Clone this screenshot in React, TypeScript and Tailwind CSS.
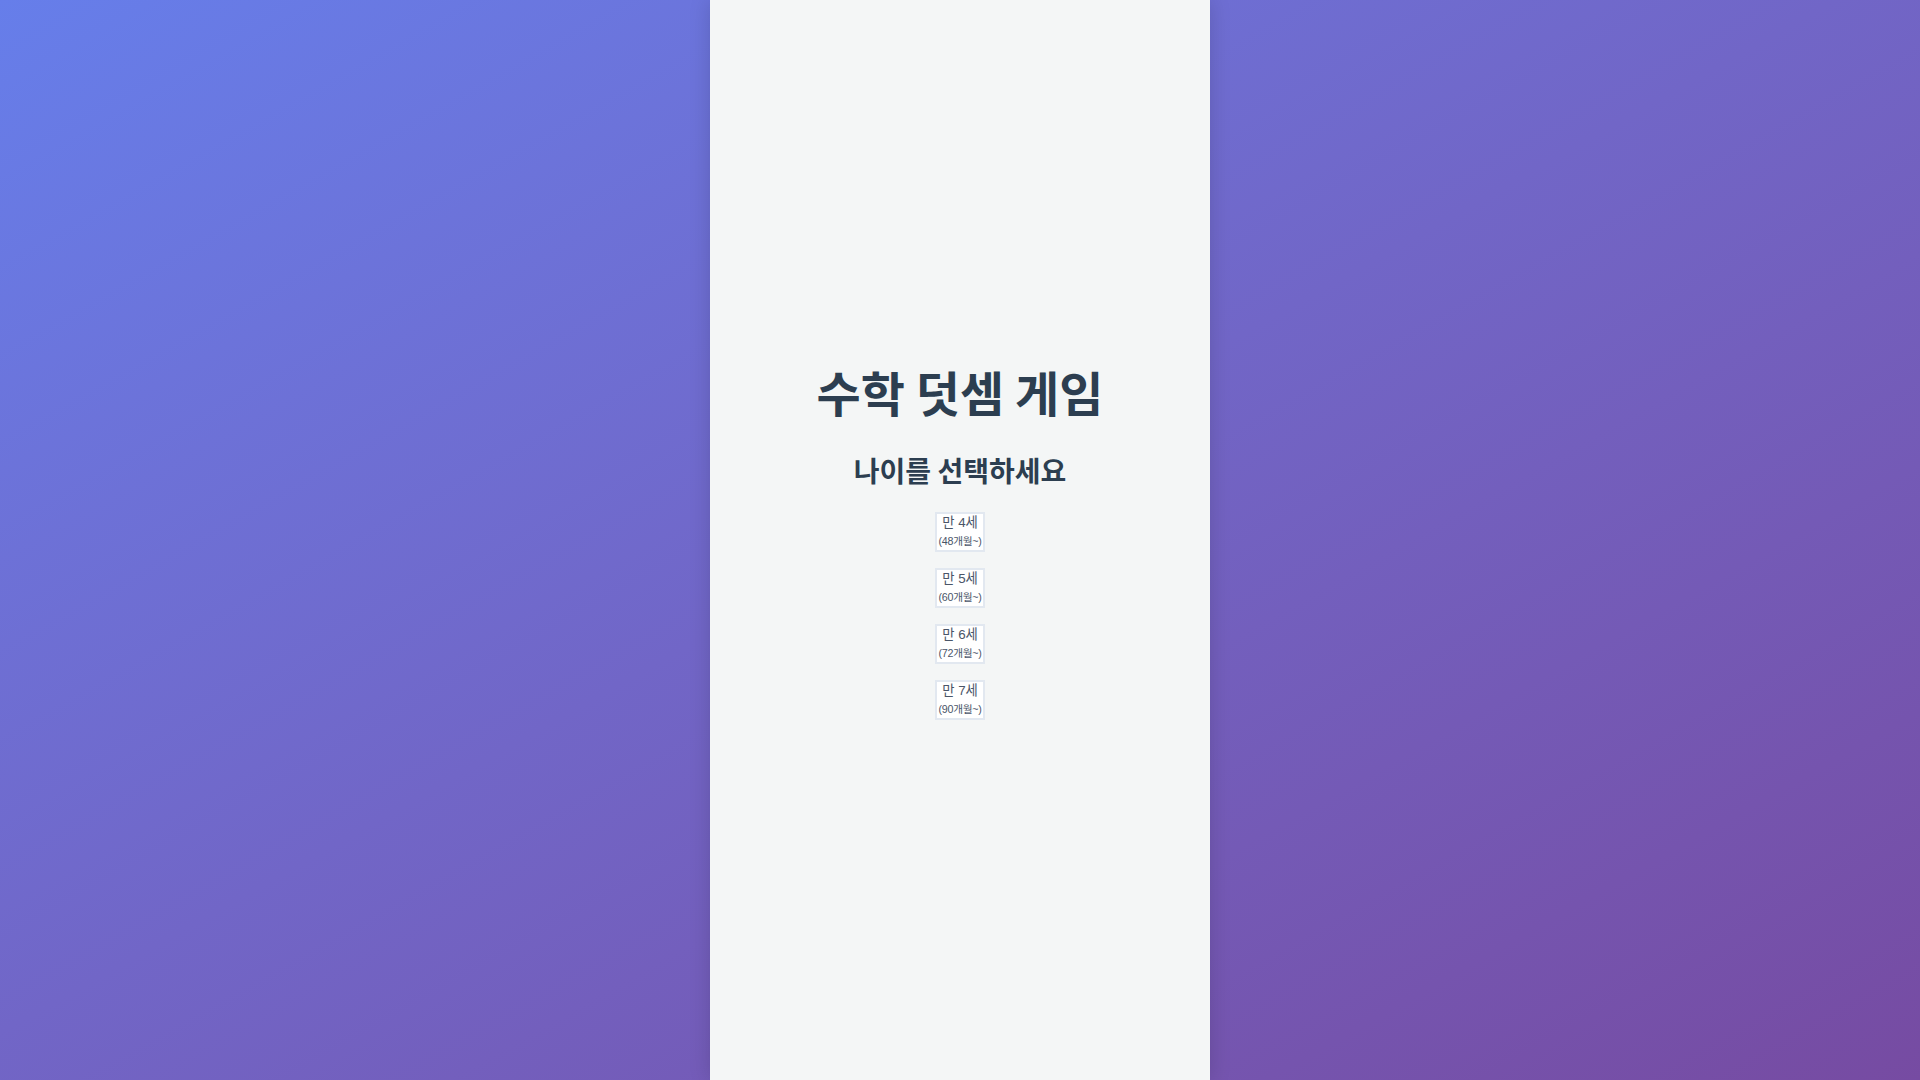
import React from 'react';

const ages = [
  { years: 4, months: 48 },
  { years: 5, months: 60 },
  { years: 6, months: 72 },
  { years: 7, months: 90 },
];

export default function App() {
  return (
    <div
      className="min-h-screen w-full flex justify-center bg-gradient-to-br from-[#667eea] to-[#764ba2]"
      style={{ fontFamily: '"Noto Sans CJK KR", "Noto Sans", sans-serif' }}
    >
      <div className="w-[500px] min-h-screen bg-[#f4f6f6] shadow-[0_0_20px_rgba(0,0,0,0.15)] flex flex-col items-center justify-center">
        <h1 className="text-[48px] font-bold text-[#2c3e50] leading-tight">수학 덧셈 게임</h1>
        <h2 className="mt-8 text-[28px] font-bold text-[#2c3e50] leading-tight">나이를 선택하세요</h2>
        <div className="mt-6 flex flex-col items-center gap-4">
          {ages.map(a => (
            <button
              key={a.years}
              className="flex flex-col items-center bg-white border-2 border-[#e2e8f0] text-[#4a5568] px-px py-0 leading-none font-['Liberation_Sans','Noto_Sans_CJK_KR',sans-serif]"
            >
              <span className="text-[13.33px] leading-[18px]">만 {a.years}세</span>
              <span className="text-[10.7px] leading-[18px] tracking-tight">({a.months}개월~)</span>
            </button>
          ))}
        </div>
      </div>
    </div>
  );
}
